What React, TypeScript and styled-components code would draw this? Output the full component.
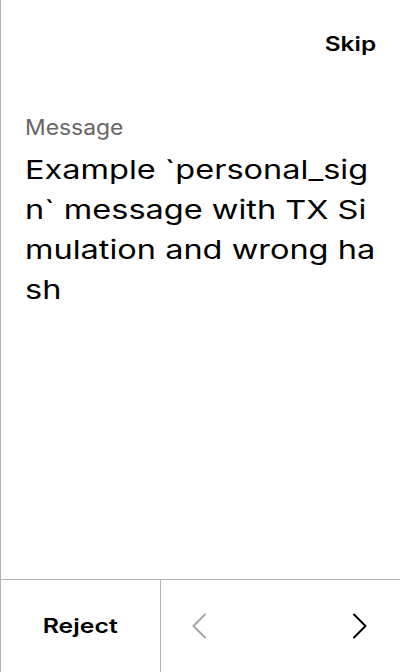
import styled, { createGlobalStyle, css } from "styled-components";

const GlobalStyle = createGlobalStyle`
  html, body {
    margin: 0;
    padding: 0;
    background: #ffffff;
  }
  body {
    font-family: Inter, "Noto Sans", sans-serif;
    color: #000000;
  }
`;

// the device renders its glyphs a little wider than they are tall
const stretched = (k: number, origin: string) => css`
  transform: scaleX(${k});
  transform-origin: ${origin};
`;

const Screen = styled.div`
  width: 400px;
  height: 672px;
  box-sizing: border-box;
  border-left: 1px solid #b3b3b3;
  display: flex;
  flex-direction: column;
  background: #ffffff;
  overflow: hidden;
`;

const Header = styled.div`
  height: 88px;
  display: flex;
  justify-content: flex-end;
  align-items: center;
  padding: 0 24px;
`;

const SkipButton = styled.button`
  border: none;
  background: none;
  padding: 0;
  font-family: Inter, sans-serif;
  font-size: 20px;
  font-weight: 600;
  color: #000000;
  cursor: pointer;
  ${stretched(1.22, "right center")}
`;

const Body = styled.div`
  flex: 1;
  padding: 24px 24px 0 24px;
  display: flex;
  flex-direction: column;
  align-items: flex-start;
`;

const Label = styled.div`
  font-size: 21px;
  line-height: 32px;
  color: #666666;
  margin-bottom: 6px;
  ${stretched(1.09, "left center")}
`;

const MessageText = styled.div`
  width: 286px;
  font-size: 26px;
  line-height: 40px;
  color: #000000;
  word-break: break-all;
  ${stretched(1.25, "left top")}
`;

const Footer = styled.div`
  height: 92px;
  border-top: 1px solid #b3b3b3;
  display: flex;
`;

const RejectCell = styled.div`
  width: 159px;
  border-right: 1px solid #b3b3b3;
  display: flex;
  align-items: center;
  justify-content: center;
`;

const RejectButton = styled.button`
  border: none;
  background: none;
  padding: 0;
  font-family: Inter, sans-serif;
  font-size: 20px;
  font-weight: 600;
  color: #000000;
  cursor: pointer;
  ${stretched(1.24, "center center")}
`;

const NavCell = styled.div`
  flex: 1;
  display: flex;
  align-items: center;
  justify-content: space-between;
  padding: 0 30px 0 28px;
`;

const ArrowButton = styled.button<{ $disabled?: boolean }>`
  border: none;
  background: none;
  padding: 0;
  width: 20px;
  height: 28px;
  display: flex;
  align-items: center;
  justify-content: center;
  color: ${(p) => (p.$disabled ? "#a6a6a6" : "#000000")};
`;

const Chevron = ({ dir }: { dir: "left" | "right" }) => (
  <svg width="16" height="26" viewBox="0 0 16 26" fill="none">
    <path
      d={dir === "left" ? "M14 1.5 L2.5 13 L14 24.5" : "M2 1.5 L13.5 13 L2 24.5"}
      stroke="currentColor"
      strokeWidth="2"
      strokeLinecap="round"
      strokeLinejoin="round"
    />
  </svg>
);

export default function App() {
  return (
    <>
      <GlobalStyle />
      <Screen>
        <Header>
          <SkipButton>Skip</SkipButton>
        </Header>
        <Body>
          <Label>Message</Label>
          <MessageText>
            Example `personal_sign` message with TX Simulation and wrong hash
          </MessageText>
        </Body>
        <Footer>
          <RejectCell>
            <RejectButton>Reject</RejectButton>
          </RejectCell>
          <NavCell>
            <ArrowButton $disabled>
              <Chevron dir="left" />
            </ArrowButton>
            <ArrowButton>
              <Chevron dir="right" />
            </ArrowButton>
          </NavCell>
        </Footer>
      </Screen>
    </>
  );
}
